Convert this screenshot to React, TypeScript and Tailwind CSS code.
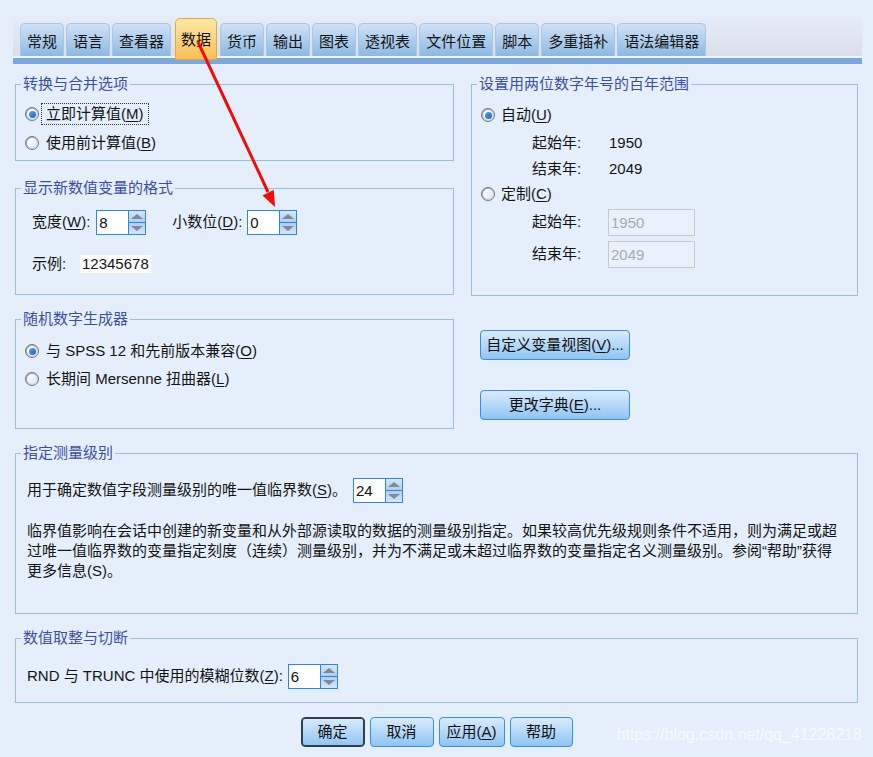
import React from "react";

const FONT = { fontFamily: '"Liberation Sans", "Noto Sans CJK SC", sans-serif' };

const tabs = ["常规", "语言", "查看器", "数据", "货币", "输出", "图表", "透视表", "文件位置", "脚本", "多重插补", "语法编辑器"];

function Radio({ checked }: { checked?: boolean }) {
  return (
    <span className="flex h-[14px] w-[14px] shrink-0 items-center justify-center rounded-full border border-[#6f7780] bg-gradient-to-br from-[#9aa2ab] to-[#e9edf1]">
      <span className="flex h-[10px] w-[10px] items-center justify-center rounded-full bg-gradient-to-br from-[#ffffff] to-[#dce6f1]">
        {checked && <span className="h-[7px] w-[7px] rounded-full bg-gradient-to-br from-[#5aa2ec] to-[#1f62b8]" />}
      </span>
    </span>
  );
}

function Spin({ value }: { value: string }) {
  return (
    <div className="flex h-[25px] border border-[#3584d8] bg-white">
      <div className="w-[31px] pl-[2px] text-[15px] leading-[23px] text-[#111]">{value}</div>
      <div className="flex w-[17px] flex-col border-l border-[#3584d8]">
        <div className="flex flex-1 items-center justify-center bg-gradient-to-b from-[#d4e7fa] to-[#abcff3]">
          <span className="h-0 w-0 border-x-[6px] border-b-[5px] border-x-transparent border-b-[#7f8893]" />
        </div>
        <div className="h-px bg-[#3584d8]" />
        <div className="flex flex-1 items-center justify-center bg-gradient-to-b from-[#abcff3] to-[#d4e7fa]">
          <span className="h-0 w-0 border-x-[6px] border-t-[5px] border-x-transparent border-t-[#7f8893]" />
        </div>
      </div>
    </div>
  );
}

function Group({ title, className, children }: { title: string; className?: string; children: React.ReactNode }) {
  return (
    <fieldset className={`border border-[#9cbde2] ${className ?? ""}`}>
      <legend className="ml-[5px] px-[2px] text-[15px] leading-[20px] text-[#3e4ea6]">{title}</legend>
      {children}
    </fieldset>
  );
}

function Btn({ children, def, className }: { children: React.ReactNode; def?: boolean; className?: string }) {
  return (
    <button
      className={`h-[30px] rounded-[4px] border bg-gradient-to-b from-[#d9ebfc] to-[#8fc4f3] text-[15px] text-[#111] ${
        def ? "border-[#2e3f54] shadow-[inset_0_0_0_1px_#2e3f54]" : "border-[#3a8fe0]"
      } ${className ?? ""}`}
    >
      {children}
    </button>
  );
}

function U({ c }: { c: string }) {
  return <span className="underline underline-offset-2">{c}</span>;
}

export default function App() {
  return (
    <div className="relative h-[757px] w-[873px] overflow-hidden bg-[#e4effb] text-[15px] text-[#141414]" style={FONT}>
      {/* tab strip */}
      <div className="ml-[13px] mt-[14px] w-[849px] bg-gradient-to-b from-[#e6eef9] to-[#d8dbe9]">
        <div className="flex h-[42px] items-end gap-[2px] pl-[7px]">
          {tabs.map((t) =>
            t === "数据" ? (
              <div
                key={t}
                className="relative z-10 -mb-[4px] ml-[2px] mr-[1px] flex h-[42px] items-center rounded-t-[5px] border border-[#e3a93c] bg-gradient-to-b from-[#fde7a6] to-[#f8bf55] px-[5px] pt-[2px] text-[#111]"
              >
                {t}
              </div>
            ) : (
              <div
                key={t}
                className="flex h-[33px] items-center rounded-t-[5px] border border-b-0 border-[#a8c6e6] bg-gradient-to-b from-[#cfe2f6] to-[#8db8e2] px-[6px] pt-[5px] text-[#141414]"
              >
                {t}
              </div>
            )
          )}
        </div>
        <div className="h-[2px] bg-[#edf3fa]" />
        <div className="h-[6px] bg-[#7ba8d6]" />
      </div>

      <div className="ml-[15px] w-[843px] pt-[10px]">
        <div className="flex gap-[17px]">
          <div className="w-[439px]">
            <Group title="转换与合并选项" className="pb-[5px]">
              <div className="pl-[9px]">
                <div className="mt-[8px] flex h-[24px] items-center gap-[2px]">
                  <Radio checked />
                  <span className="border border-dotted border-[#333] px-[4px] leading-[20px]">
                    立即计算值(<U c="M" />)
                  </span>
                </div>
                <div className="mt-[5px] flex h-[24px] items-center gap-[7px]">
                  <Radio />
                  <span>
                    使用前计算值(<U c="B" />)
                  </span>
                </div>
              </div>
            </Group>
            <Group title="显示新数值变量的格式" className="mt-[17px] pb-[18px]">
              <div className="pl-[16px]">
                <div className="mt-[12px] flex items-center">
                  <span>
                    宽度(<U c="W" />):
                  </span>
                  <div className="ml-[6px]">
                    <Spin value="8" />
                  </div>
                  <span className="ml-[26px]">
                    小数位(<U c="D" />):
                  </span>
                  <div className="ml-[5px]">
                    <Spin value="0" />
                  </div>
                </div>
                <div className="mt-[17px] flex h-[24px] items-center">
                  <span className="w-[48px]">示例:</span>
                  <span className="bg-white px-[2px] leading-[18px]">12345678</span>
                </div>
              </div>
            </Group>
          </div>

          <div className="w-[387px]">
            <Group title="设置用两位数字年号的百年范围" className="h-[222px]">
              <div className="pl-[9px]">
                <div className="mt-[11px] flex h-[20px] items-center gap-[6px]">
                  <Radio checked />
                  <span>
                    自动(<U c="U" />)
                  </span>
                </div>
                <div className="ml-[51px] mt-[8px] flex h-[20px] items-center">
                  <span className="w-[77px]">起始年:</span>
                  <span>1950</span>
                </div>
                <div className="ml-[51px] mt-[6px] flex h-[20px] items-center">
                  <span className="w-[77px]">结束年:</span>
                  <span>2049</span>
                </div>
                <div className="mt-[5px] flex h-[20px] items-center gap-[6px]">
                  <Radio />
                  <span>
                    定制(<U c="C" />)
                  </span>
                </div>
                <div className="ml-[51px] mt-[5px] flex h-[27px] items-center">
                  <span className="w-[76px]">起始年:</span>
                  <div className="h-[27px] w-[87px] border border-[#c6c9cd] bg-[#e9f1fa] pl-[2px] leading-[25px] text-[#a8abaf]">1950</div>
                </div>
                <div className="ml-[51px] mt-[5px] flex h-[27px] items-center">
                  <span className="w-[76px]">结束年:</span>
                  <div className="h-[27px] w-[87px] border border-[#c6c9cd] bg-[#e9f1fa] pl-[2px] leading-[25px] text-[#a8abaf]">2049</div>
                </div>
              </div>
            </Group>
          </div>
        </div>

        <div className="mt-[13px] flex gap-[17px]">
          <div className="w-[439px]">
            <Group title="随机数字生成器" className="pb-[37px]">
              <div className="pl-[9px]">
                <div className="mt-[10px] flex h-[24px] items-center gap-[7px]">
                  <Radio checked />
                  <span>
                    与 SPSS 12 和先前版本兼容(<U c="O" />)
                  </span>
                </div>
                <div className="mt-[4px] flex h-[24px] items-center gap-[7px]">
                  <Radio />
                  <span>
                    长期间 Mersenne 扭曲器(<U c="L" />)
                  </span>
                </div>
              </div>
            </Group>
          </div>
          <div className="flex flex-col items-start pl-[9px] pt-[21px]">
            <Btn className="w-[150px]">
              自定义变量视图(<U c="V" />)...
            </Btn>
            <Btn className="mt-[30px] w-[150px]">
              更改字典(<U c="E" />)...
            </Btn>
          </div>
        </div>

        <Group title="指定测量级别" className="mt-[14px] pb-[32px]">
          <div className="pl-[11px]">
            <div className="mt-[15px] flex items-center">
              <span>
                用于确定数值字段测量级别的唯一值临界数(<U c="S" />)。
              </span>
              <div className="ml-[6px]">
                <Spin value="24" />
              </div>
            </div>
            <p className="mt-[18px] whitespace-nowrap leading-[20px]">
              临界值影响在会话中创建的新变量和从外部源读取的数据的测量级别指定。如果较高优先级规则条件不适用，则为满足或超
              <br />
              过唯一值临界数的变量指定刻度（连续）测量级别，并为不满足或未超过临界数的变量指定名义测量级别。参阅“帮助”获得
              <br />
              更多信息(S)。
            </p>
          </div>
        </Group>

        <Group title="数值取整与切断" className="mt-[14px] pb-[13px]">
          <div className="pl-[11px]">
            <div className="mt-[16px] flex items-center">
              <span>
                RND 与 TRUNC 中使用的模糊位数(<U c="Z" />):
              </span>
              <div className="ml-[5px]">
                <Spin value="6" />
              </div>
            </div>
          </div>
        </Group>
      </div>

      <div className="mt-[14px] flex justify-center gap-[5px]">
        <Btn def className="w-[64px]">确定</Btn>
        <Btn className="w-[64px]">取消</Btn>
        <Btn className="w-[66px]">
          应用(<U c="A" />)
        </Btn>
        <Btn className="w-[63px]">帮助</Btn>
      </div>

      <span className="absolute bottom-[10px] right-[11px] text-[16px] text-[#f6f9fd]">https://blog.csdn.net/qq_41228218</span>

      {/* red annotation arrow */}
      <svg className="pointer-events-none absolute left-0 top-0 z-20" width="873" height="757">
        <line x1="198" y1="42" x2="268" y2="192" stroke="#f20d0d" strokeWidth="3" />
        <polygon points="275,207 262.5,195.5 273.8,189.8" fill="#f20d0d" />
      </svg>
    </div>
  );
}
